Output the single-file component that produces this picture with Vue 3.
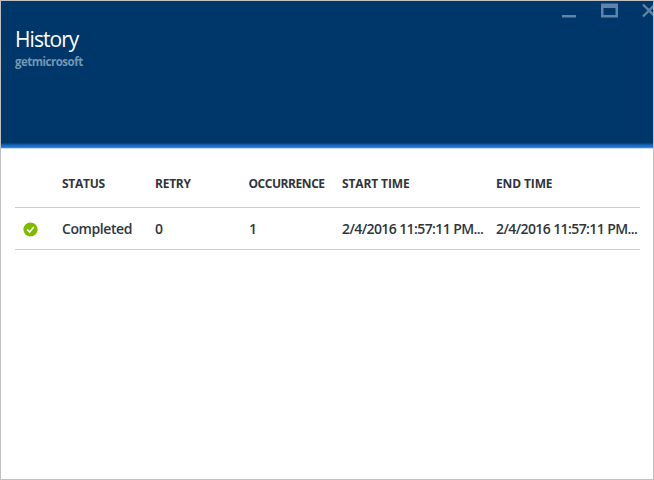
<script setup>
const columns = ['STATUS', 'RETRY', 'OCCURRENCE', 'START TIME', 'END TIME']
const rows = [
  { status: 'Completed', retry: '0', occurrence: '1', start: '2/4/2016 11:57:11 PM...', end: '2/4/2016 11:57:11 PM...' },
]
</script>

<template>
  <div class="blade">
    <header class="head">
      <div class="titles">
        <h1>History</h1>
        <p>getmicrosoft</p>
      </div>
      <svg class="controls" width="93" height="20" viewBox="560 1 93 20">
        <rect x="562" y="15" width="14" height="2.5" />
        <path fill-rule="evenodd" d="M601 3.5h17v14h-17zM603.5 8v7h12v-7z" />
        <path class="cross" d="M643 4.5L655 16.5M655 4.5L643 16.5" />
      </svg>
    </header>
    <div class="accent"></div>
    <main class="table">
      <div class="row labels">
        <span></span>
        <span v-for="c in columns" :key="c" :class="{ tight: c === 'OCCURRENCE', wide: c.endsWith('TIME') }">{{ c }}</span>
      </div>
      <div v-for="(r, i) in rows" :key="i" class="row values">
        <svg class="ok" width="15" height="15" viewBox="0 0 15 15">
          <circle cx="7.5" cy="7.5" r="7.1" />
          <path d="M4.2 7.5L6.6 10L10.8 5" />
        </svg>
        <span>{{ r.status }}</span>
        <span>{{ r.retry }}</span>
        <span>{{ r.occurrence }}</span>
        <span class="date">{{ r.start }}</span>
        <span class="date">{{ r.end }}</span>
      </div>
    </main>
  </div>
</template>

<style>
body { margin: 0; }
</style>

<style scoped>
.blade {
  box-sizing: border-box;
  width: 654px;
  height: 480px;
  border: 1px solid #c0c0c0;
  background: #fff;
  overflow: hidden;
  font-family: "Open Sans", sans-serif;
  color: #30353d;
}
.head {
  display: flex;
  justify-content: space-between;
  height: 142px;
  background: #00376b;
}
.titles { padding: 24px 0 0 14px; }
h1 {
  margin: 0;
  font-size: 21px;
  font-weight: 400;
  line-height: 29px;
  letter-spacing: -0.95px;
  color: #fff;
}
p {
  margin: 0;
  font-size: 11.5px;
  font-weight: 700;
  line-height: 16px;
  letter-spacing: -0.5px;
  color: #7396b5;
}
.controls { fill: #5f84a8; }
.cross { fill: none; stroke: #5f84a8; stroke-width: 2.3; }
.accent {
  height: 6px;
  background: linear-gradient(#08458a 0 1px, #1059a8 1px 2px, #1b6cc8 2px 4px, #3f87d6 4px 5px, #c5dcf4 5px 6px);
}
.table { margin: 0 13px 0 14px; }
.row {
  display: grid;
  grid-template-columns: 47px 93px 94px 93px 154px 144px;
  align-items: center;
  border-bottom: 1px solid #ccc;
  white-space: nowrap;
}
.labels {
  height: 46px;
  padding-top: 12px;
  font-size: 12px;
  font-weight: 700;
  line-height: 16px;
  letter-spacing: -0.25px;
}
.labels .tight { letter-spacing: -0.45px; margin-left: -0.5px; }
.labels .wide { letter-spacing: -0.12px; }
.values {
  height: 41px;
  font-size: 14px;
  font-weight: 600;
  line-height: 20px;
  letter-spacing: -0.42px;
}
.values .date { letter-spacing: -0.6px; }
.ok { margin: 2px 0 0 8px; }
.ok circle { fill: #7fba00; }
.ok path { fill: none; stroke: #fff; stroke-width: 1.7; }
</style>
